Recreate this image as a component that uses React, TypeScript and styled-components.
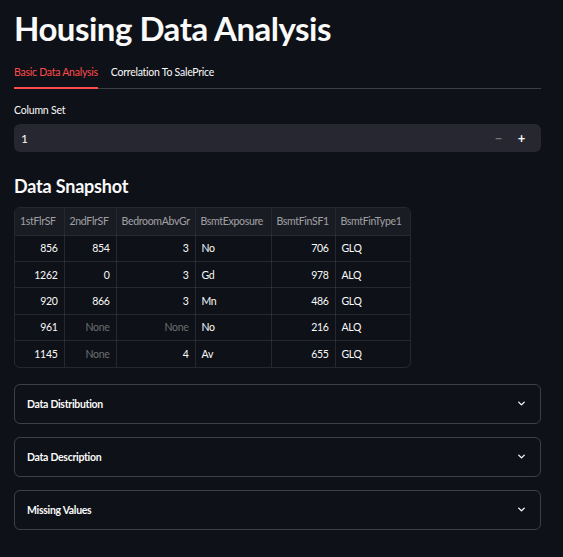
import React from "react";
import styled, { createGlobalStyle } from "styled-components";
import { ChevronDown } from "lucide-react";

const Global = createGlobalStyle`
  html, body { margin: 0; padding: 0; background: #0e1117; }
  body { font-family: "Source Sans Pro", Lato, sans-serif; color: #fafafa; }
  * { box-sizing: border-box; }
`;

const Page = styled.main`
  width: 563px;
  min-height: 557px;
  padding: 0 22px 20px 14px;
  display: flex;
  flex-direction: column;
`;

const Title = styled.h1`
  margin: 0;
  padding-top: 6px;
  font-size: 33px;
  line-height: 44px;
  font-weight: 700;
  letter-spacing: -0.5px;
`;

const TabList = styled.div`
  margin-top: 8px;
  display: flex;
  gap: 13px;
  border-bottom: 1px solid rgba(250, 250, 250, 0.2);
`;

const Tab = styled.div<{ $active?: boolean }>`
  height: 31px;
  padding-bottom: 3px;
  display: flex;
  align-items: center;
  font-size: 10.5px;
  letter-spacing: -0.25px;
  color: ${(p) => (p.$active ? "#ff4b4b" : "#fafafa")};
  box-shadow: ${(p) => (p.$active ? "inset 0 -2px 0 #ff4b4b" : "none")};
  margin-bottom: -1px;
`;

const Label = styled.label`
  margin-top: 14px;
  font-size: 10.5px;
  line-height: 14px;
  letter-spacing: -0.2px;
`;

const NumberInput = styled.div`
  margin-top: 7px;
  height: 28px;
  border-radius: 6px;
  background: #262730;
  display: flex;
  align-items: center;
  padding: 0 8px 0 7px;
  font-size: 12px;
`;

const Value = styled.span`
  flex: 1;
`;

const StepButton = styled.span<{ $dim?: boolean }>`
  width: 23px;
  text-align: center;
  font-size: 13px;
  font-weight: 700;
  color: ${(p) => (p.$dim ? "rgba(250,250,250,0.4)" : "#fafafa")};
`;

const Subheader = styled.h3`
  margin: 22px 0 0;
  font-size: 18px;
  line-height: 24px;
  font-weight: 700;
  letter-spacing: -0.2px;
`;

const TableWrap = styled.div`
  margin-top: 9px;
  width: 397px;
  border: 1px solid rgba(250, 250, 250, 0.1);
  border-radius: 6px;
  overflow: hidden;
`;

const Table = styled.table`
  border-collapse: collapse;
  width: 100%;
  table-layout: fixed;
  font-size: 10.5px;
  letter-spacing: -0.3px;
`;

const Th = styled.th`
  height: 27px;
  font-weight: 400;
  color: rgba(250, 250, 250, 0.6);
  background: #1a1c24;
  text-align: left;
  padding: 0 5px;
  white-space: nowrap;
  overflow: hidden;
  border-right: 1px solid rgba(250, 250, 250, 0.1);
  border-bottom: 1px solid rgba(250, 250, 250, 0.1);
  &:last-child { border-right: none; }
`;

const Td = styled.td<{ $num?: boolean; $none?: boolean }>`
  height: 26.4px;
  padding: 0 6px;
  text-align: ${(p) => (p.$num ? "right" : "left")};
  color: ${(p) => (p.$none ? "rgba(250,250,250,0.4)" : "#fafafa")};
  border-right: 1px solid rgba(250, 250, 250, 0.1);
  border-bottom: 1px solid rgba(250, 250, 250, 0.1);
  &:last-child { border-right: none; }
  tr:last-child > & { border-bottom: none; }
`;

const Expanders = styled.div`
  margin-top: 16px;
  display: flex;
  flex-direction: column;
  gap: 13px;
`;

const Expander = styled.div`
  height: 40px;
  flex: none;
  border: 1px solid rgba(250, 250, 250, 0.2);
  border-radius: 6px;
  display: flex;
  align-items: center;
  justify-content: space-between;
  padding: 0 13px 0 12px;
  font-size: 10.5px;
  letter-spacing: -0.3px;
  font-weight: 700;
`;

const cols = [
  { name: "1stFlrSF", w: 49, num: true },
  { name: "2ndFlrSF", w: 52, num: true },
  { name: "BedroomAbvGr", w: 79, num: true },
  { name: "BsmtExposure", w: 76, num: false },
  { name: "BsmtFinSF1", w: 64, num: true },
  { name: "BsmtFinType1", w: 76, num: false },
];

const rows = [
  ["856", "854", "3", "No", "706", "GLQ"],
  ["1262", "0", "3", "Gd", "978", "ALQ"],
  ["920", "866", "3", "Mn", "486", "GLQ"],
  ["961", "None", "None", "No", "216", "ALQ"],
  ["1145", "None", "4", "Av", "655", "GLQ"],
];

export default function App() {
  return (
    <Page>
      <Global />
      <Title>Housing Data Analysis</Title>
      <TabList>
        <Tab $active>Basic Data Analysis</Tab>
        <Tab>Correlation To SalePrice</Tab>
      </TabList>
      <Label>Column Set</Label>
      <NumberInput>
        <Value>1</Value>
        <StepButton $dim>−</StepButton>
        <StepButton>+</StepButton>
      </NumberInput>
      <Subheader>Data Snapshot</Subheader>
      <TableWrap>
        <Table>
          <colgroup>
            {cols.map((c) => (
              <col key={c.name} style={{ width: c.w }} />
            ))}
          </colgroup>
          <thead>
            <tr>
              {cols.map((c) => (
                <Th key={c.name}>{c.name}</Th>
              ))}
            </tr>
          </thead>
          <tbody>
            {rows.map((r, i) => (
              <tr key={i}>
                {r.map((v, j) => (
                  <Td key={j} $num={cols[j].num} $none={v === "None"}>
                    {v}
                  </Td>
                ))}
              </tr>
            ))}
          </tbody>
        </Table>
      </TableWrap>
      <Expanders>
        {["Data Distribution", "Data Description", "Missing Values"].map((t) => (
          <Expander key={t}>
            <span>{t}</span>
            <ChevronDown size={11} strokeWidth={3} />
          </Expander>
        ))}
      </Expanders>
    </Page>
  );
}
